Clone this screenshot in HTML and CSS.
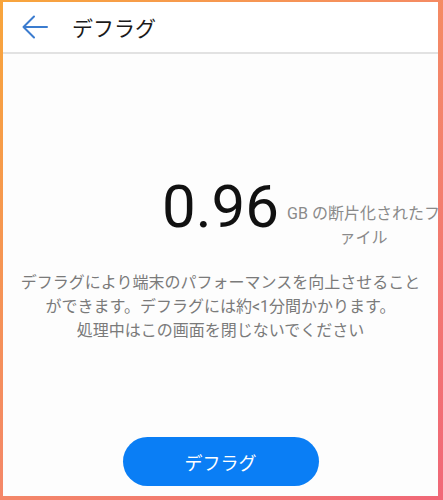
FILE: index.html
```html
<!DOCTYPE html>
<html lang="ja">
<head>
  <meta charset="UTF-8" />
  <meta name="viewport" content="width=device-width, initial-scale=1.0" />
  <title>デフラグ</title>
  <link rel="stylesheet" href="styles.css">
</head>
<body>
  <div class="frame">
    <header class="topbar">
      <button class="back" aria-label="戻る">
        <svg width="26" height="24" viewBox="0 0 26 24">
          <path d="M1.5 12 H25 M12 1.5 L1.5 12 L12 22.5" fill="none" stroke="#3b7ccf" stroke-width="2" stroke-linecap="round" stroke-linejoin="round"/>
        </svg>
      </button>
      <h1 class="title">デフラグ</h1>
    </header>

    <main class="content">
      <div class="stat">
        <span class="stat-value">0.96</span>
        <span class="stat-label">GB の断片化されたファイル</span>
      </div>
      <p class="desc">デフラグにより端末のパフォーマンスを向上させること<br>ができます。デフラグには約&lt;1分間かかります。<br>処理中はこの画面を閉じないでください</p>
      <button class="run">デフラグ</button>
    </main>
  </div>
</body>
</html>
```

FILE: styles.css
```css
* {
  box-sizing: border-box;
  margin: 0;
  padding: 0;
}

body {
  font-family: Roboto, "Noto Sans CJK JP", sans-serif;
  background: #fff;
}

.frame {
  height: 500px;
  display: flex;
  flex-direction: column;
  border-style: solid;
  border-width: 2px 5px 4px 3px;
  border-image: linear-gradient(135deg, #f8a53c, #f4866a 55%, #f16878) 1;
  background: #fdfdfd;
}

.topbar {
  height: 52px;
  display: flex;
  align-items: center;
  padding-left: 19px;
  background: #fff;
  border-bottom: 2px solid #e2e2e2;
}

.back {
  display: flex;
  background: none;
  border: none;
  cursor: pointer;
}

.title {
  margin-left: 24px;
  font-size: 21px;
  font-weight: 400;
  color: #1a1a1a;
}

.content {
  flex: 1;
  display: flex;
  flex-direction: column;
  align-items: center;
  padding: 123px 10px 10px;
}

.stat {
  display: grid;
  grid-template-columns: minmax(0, 1fr) auto minmax(0, 1fr);
  width: calc(100% + 20px);
  margin: 0 -10px;
}

.stat-value {
  grid-column: 2;
  font-size: 60px;
  line-height: 60px;
  color: #111;
}

.stat-label {
  grid-column: 3;
  justify-self: start;
  width: 155px;
  margin: 25px 0 0 7px;
  font-size: 16px;
  line-height: 24px;
  color: #8a8a8a;
  text-align: center;
  line-break: loose;
}

.desc {
  margin-top: 21px;
  font-size: 16px;
  line-height: 24px;
  color: #7a7a7a;
  text-align: center;
}

.run {
  margin-top: auto;
  width: 196px;
  height: 49px;
  border: none;
  border-radius: 25px;
  background: #0a7ef5;
  color: #fff;
  font-family: Roboto, "Noto Sans CJK JP", sans-serif;
  font-size: 18px;
  cursor: pointer;
}
```
